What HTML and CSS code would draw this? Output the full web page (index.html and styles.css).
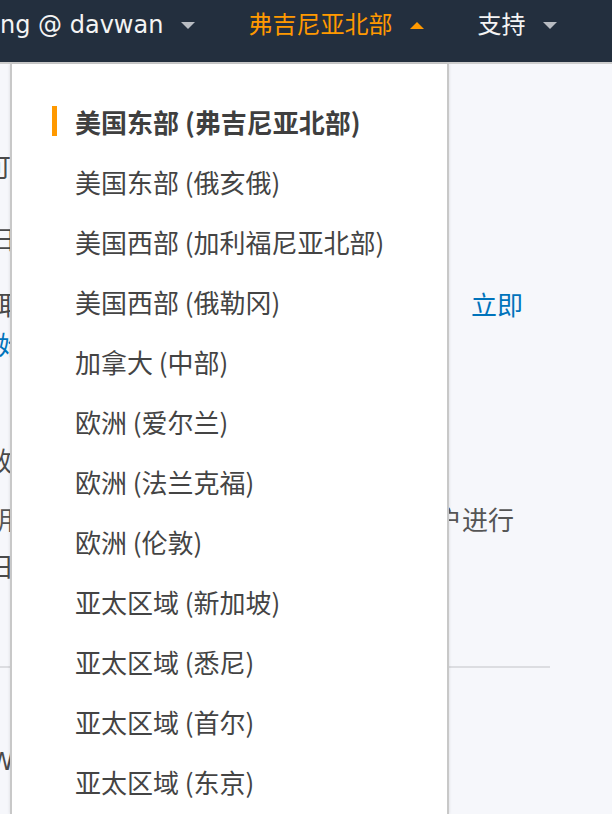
FILE: index.html
```html
<!DOCTYPE html>
<html lang="zh-CN">
<head>
<meta charset="utf-8">
<title>区域选择</title>
<link rel="stylesheet" href="styles.css">
</head>
<body>
<header class="topbar">
  <div class="nav-item">
    <span class="nav-text latin">ng @ davwan</span>
    <svg class="caret" width="14" height="7" viewBox="0 0 14 7"><polygon points="0,0 14,0 7,7" fill="#b8bcc2"/></svg>
  </div>
  <div class="nav-item nav-active">
    <span class="nav-text">弗吉尼亚北部</span>
    <svg class="caret" width="14" height="7" viewBox="0 0 14 7"><polygon points="0,7 14,7 7,0" fill="#ff9900"/></svg>
  </div>
  <div class="nav-item">
    <span class="nav-text">支持</span>
    <svg class="caret" width="14" height="7" viewBox="0 0 14 7"><polygon points="0,0 14,0 7,7" fill="#b8bcc2"/></svg>
  </div>
</header>

<main class="page">
  <div class="content">
    <p class="line l1">可</p>
    <p class="line l2">扫</p>
    <p class="line l3 split"><span>取</span><span class="link">立即</span></p>
    <p class="line l4 link">始</p>
    <p class="line l5">效</p>
    <p class="line l6 split"><span>用</span><span>户进行</span></p>
    <p class="line l7">日</p>
    <hr class="rule">
    <p class="line l8 latin">W</p>
  </div>

  <nav class="dropdown">
    <ul class="menu">
      <li class="menu-item active">美国东部 (弗吉尼亚北部)</li>
      <li class="menu-item">美国东部 (俄亥俄)</li>
      <li class="menu-item">美国西部 (加利福尼亚北部)</li>
      <li class="menu-item">美国西部 (俄勒冈)</li>
      <li class="menu-item">加拿大 (中部)</li>
      <li class="menu-item">欧洲 (爱尔兰)</li>
      <li class="menu-item">欧洲 (法兰克福)</li>
      <li class="menu-item">欧洲 (伦敦)</li>
      <li class="menu-item">亚太区域 (新加坡)</li>
      <li class="menu-item">亚太区域 (悉尼)</li>
      <li class="menu-item">亚太区域 (首尔)</li>
      <li class="menu-item">亚太区域 (东京)</li>
    </ul>
  </nav>
</main>
</body>
</html>
```
FILE: styles.css
```css
* { box-sizing: border-box; }

html, body {
  margin: 0;
  padding: 0;
  height: 100%;
  overflow: hidden;
  background: #f6f7fb;
  font-family: "Noto Sans CJK SC", "Noto Sans", sans-serif;
}

.topbar {
  display: flex;
  align-items: flex-start;
  height: 64px;
  padding-top: 10px;
  background: #232f3e;
  border-bottom: 2px solid #cdcdcd;
  white-space: nowrap;
}

.nav-item {
  display: flex;
  align-items: center;
  gap: 18px;
  margin-right: 53px;
  height: 30px;
  color: #f4f4f4;
}

.nav-text {
  font-size: 24px;
  line-height: 30px;
  font-family: "DejaVu Sans", "Noto Sans CJK SC", sans-serif;
}

.nav-active { color: #ff9900; }

.caret { display: block; margin-top: 1px; }

.page {
  position: relative;
  height: 750px;
}

.content {
  padding-top: 87px;
  color: #4a4a4a;
  font-size: 26px;
}

.line {
  margin: 0;
  height: 30px;
  line-height: 30px;
  white-space: nowrap;
}

.latin { font-family: "DejaVu Sans", sans-serif; }

.split {
  display: flex;
  justify-content: space-between;
}

.link { color: #0073bb; }

.l1 { margin-left: -15px; }
.l2 { margin-top: 42px; margin-left: -12px; }
.l3 { margin-top: 36px; margin-left: -2px; padding-right: 89px; }
.l4 { margin-top: 10px; margin-left: -2px; }
.l5 { margin-top: 86px; margin-left: -14px; }
.l6 { margin-top: 29px; margin-left: -3px; padding-right: 98px; color: #555; }
.l7 { margin-top: 17px; margin-left: -12px; }
.l8 { margin-top: 79px; margin-left: -10px; font-size: 24px; }

.rule {
  margin: 85px 0 0 0;
  width: 550px;
  height: 2px;
  border: 0;
  background: #dcdde1;
}

.dropdown {
  position: absolute;
  top: 0;
  left: 10px;
  width: 439px;
  height: 750px;
  background: #ffffff;
  border-left: 2px solid #c8c8c8;
  border-right: 2px solid #c8c8c8;
  box-shadow: 0 0 3px rgba(0, 0, 0, 0.12);
}

.menu {
  list-style: none;
  margin: 0;
  padding: 27px 0 0 40px;
}

.menu-item {
  display: flex;
  align-items: center;
  height: 60px;
  font-size: 26px;
  color: #444444;
  white-space: nowrap;
}

.menu-item::before {
  content: "";
  display: block;
  width: 5px;
  height: 30px;
  margin-right: 18px;
  margin-top: -1px;
  background: transparent;
}

.menu-item.active {
  font-weight: 700;
  color: #3f3f3f;
}

.menu-item.active::before { background: #ff9900; }
```
